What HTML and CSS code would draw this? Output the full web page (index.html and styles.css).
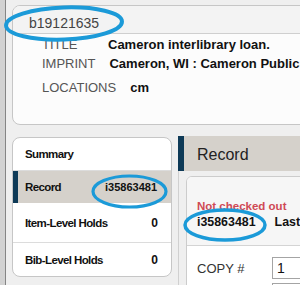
FILE: index.html
```html
<!DOCTYPE html>
<html>
<head>
<meta charset="utf-8">
<link rel="stylesheet" href="styles.css">
</head>
<body>
<div class="window">
  <div class="rail"></div>
  <div class="main">
    <section class="bib-card">
      <div class="bib-head">b19121635</div>
      <div class="bib-body">
        <div class="field"><span class="label">TITLE</span><span class="value">Cameron interlibrary loan.</span></div>
        <div class="field"><span class="label">IMPRINT</span><span class="value">Cameron, WI : Cameron Public</span></div>
        <div class="field loc"><span class="label">LOCATIONS</span><span class="value">cm</span></div>
      </div>
    </section>
    <div class="lower">
      <nav class="nav-card">
        <div class="nav-item"><span>Summary</span></div>
        <div class="nav-item active"><span>Record</span><span class="num">i35863481</span></div>
        <div class="nav-item tall"><span>Item-Level Holds</span><span class="count">0</span></div>
        <div class="nav-item last"><span>Bib-Level Holds</span><span class="count">0</span></div>
      </nav>
      <section class="panel">
        <div class="panel-head">Record</div>
        <div class="panel-body">
          <div class="rec-box">
            <div class="status">
              <div class="status-red">Not checked out</div>
              <div class="status-line"><span class="rec-num">i35863481</span><span class="upd">Last</span></div>
            </div>
            <div class="form-row"><span class="flabel">COPY #</span><span class="input">1</span></div>
            <div class="form-row"><span class="flabel"></span><span class="input"></span></div>
          </div>
        </div>
      </section>
    </div>
  </div>
</div>
<svg class="marks" width="300" height="285" viewBox="0 0 300 285">
  <ellipse cx="64" cy="23.5" rx="58" ry="16" transform="rotate(-2 64 23.5)" fill="none" stroke="#1b9ad8" stroke-width="4"/>
  <ellipse cx="129.5" cy="191.5" rx="36.5" ry="15.5" fill="none" stroke="#1b9ad8" stroke-width="3.2"/>
  <ellipse cx="225" cy="225" rx="40" ry="15" fill="none" stroke="#1b9ad8" stroke-width="3.5"/>
</svg>
</body>
</html>
```
FILE: styles.css
```css
html, body {
  margin: 0;
  padding: 0;
}
body {
  width: 300px;
  height: 285px;
  overflow: hidden;
  position: relative;
  background: #efefef;
  font-family: "Liberation Sans", Arial, sans-serif;
  color: #222;
}
.window {
  display: flex;
  height: 285px;
}
.rail {
  width: 5px;
  flex: none;
  background: #d2d2d2;
  border-right: 1px solid #858585;
}
.main {
  padding: 5px 0 0 6px;
  width: 520px;
  flex: none;
}
.bib-card {
  box-sizing: border-box;
  height: 120px;
  border: 1px solid #c6c6c6;
  border-radius: 8px;
  background: #fcfcfc;
  overflow: hidden;
}
.bib-head {
  box-sizing: border-box;
  height: 28px;
  padding: 7px 0 0 16px;
  line-height: 20px;
  font-size: 14px;
  color: #444;
  background: #f3f3f3;
  border-bottom: 1px solid #cfcfcf;
}
.bib-body {
  padding: 1px 0 0 29px;
}
.field {
  display: flex;
  line-height: 19px;
  font-size: 13px;
  white-space: nowrap;
}
.field.loc {
  margin-top: 5px;
}
.label {
  min-width: 52px;
  margin-right: 14px;
  color: #555;
}
.value {
  font-weight: bold;
  color: #111;
}
.lower {
  display: flex;
  margin-top: 12px;
  align-items: flex-start;
}
.nav-card {
  box-sizing: border-box;
  width: 160px;
  flex: none;
  background: #fff;
  border: 1px solid #c6c6c6;
  border-radius: 8px;
  overflow: hidden;
}
.nav-item {
  box-sizing: border-box;
  height: 33px;
  display: flex;
  align-items: center;
  justify-content: space-between;
  padding: 0 13px 0 12px;
  font-size: 11.5px;
  letter-spacing: -0.6px;
  font-weight: bold;
  color: #111;
  border-bottom: 1px solid #dcdcdc;
}
.nav-item.active {
  height: 32px;
  background: #d5d1cb;
  border-left: 5px solid #0e3a57;
  padding-left: 7px;
  border-bottom: none;
}
.nav-item.tall {
  height: 40px;
}
.nav-item.last {
  border-bottom: none;
}
.num {
  font-size: 11px;
  letter-spacing: 0;
  margin-right: 1px;
}
.count {
  letter-spacing: 0;
  font-size: 12px;
}
.panel {
  margin-left: 6px;
  margin-top: -1px;
  flex: 1;
  border-left: 1px solid #d0d0d0;
}
.panel-head {
  box-sizing: border-box;
  height: 35px;
  padding: 2px 0 0 13px;
  line-height: 33px;
  font-size: 16px;
  color: #222;
  background: #d5d1cb;
  border-left: 6px solid #0e3a57;
  margin-left: -1px;
}
.panel-body {
  padding: 5px 0 0 7px;
}
.rec-box {
  background: #fff;
  border: 1px solid #cccccc;
  border-radius: 6px 0 0 0;
  overflow: hidden;
}
.status {
  background: #f6f6f6;
  padding: 22px 0 14px 10px;
  border-bottom: 1px solid #d4d4d4;
  white-space: nowrap;
}
.status-red {
  line-height: 14px;
  font-size: 11.5px;
  font-weight: bold;
  color: #cf4a55;
}
.status-line {
  margin-top: 1px;
  line-height: 17px;
  font-size: 12.4px;
  font-weight: bold;
  color: #111;
  display: flex;
  gap: 19px;
}
.form-row {
  display: flex;
  align-items: center;
  padding: 11px 0 0 10px;
}
.form-row + .form-row {
  padding-top: 4px;
}
.flabel {
  width: 75px;
  font-size: 13px;
  color: #333;
}
.input {
  box-sizing: border-box;
  width: 120px;
  height: 22px;
  border: 1px solid #a4a4a4;
  background: #fff;
  padding: 0 4px;
  line-height: 20px;
  font-size: 14px;
  color: #111;
}
.marks {
  position: absolute;
  left: 0;
  top: 0;
  pointer-events: none;
}
```
